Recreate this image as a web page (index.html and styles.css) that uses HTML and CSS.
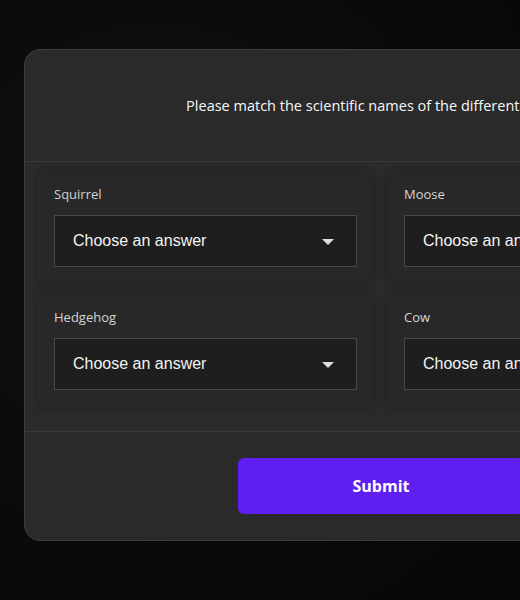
FILE: index.html
```html
<!DOCTYPE html>
<html lang="en">
<head>
<meta charset="utf-8">
<title>Match the animals</title>
<link rel="stylesheet" href="styles.css">
</head>
<body>
<main class="card">
  <header class="card-head">
    <p class="prompt">Please match the scientific names of the different animals</p>
  </header>
  <section class="grid">
    <div class="item">
      <label class="label">Squirrel</label>
      <div class="select"><span>Choose an answer</span><span class="arrow"></span></div>
    </div>
    <div class="item">
      <label class="label">Moose</label>
      <div class="select"><span>Choose an answer</span><span class="arrow"></span></div>
    </div>
    <div class="item">
      <label class="label">Hedgehog</label>
      <div class="select"><span>Choose an answer</span><span class="arrow"></span></div>
    </div>
    <div class="item">
      <label class="label">Cow</label>
      <div class="select"><span>Choose an answer</span><span class="arrow"></span></div>
    </div>
  </section>
  <footer class="card-foot">
    <button class="submit">Submit</button>
  </footer>
</main>
</body>
</html>
```
FILE: styles.css
```css
html, body {
  margin: 0;
  height: 100%;
}
body {
  background: radial-gradient(ellipse at 30% 40%, #121212 0%, #0a0a0a 60%, #060606 100%);
  overflow: hidden;
  padding: 49px 0 0 24px;
  box-sizing: border-box;
  font-family: "Open Sans", "Noto Sans", sans-serif;
}
.card {
  width: 714px;
  box-sizing: border-box;
  background: #2a2a2a;
  border: 1px solid #3d3d3d;
  border-radius: 16px;
}
.card-head {
  height: 111px;
  display: flex;
  align-items: center;
  justify-content: center;
  border-bottom: 1px solid #3a3a3a;
}
.prompt {
  margin: 0;
  color: #f7f7f7;
  font-size: 14.5px;
  font-weight: 500;
}
.grid {
  display: grid;
  grid-template-columns: 336px 336px;
  gap: 10px 14px;
  padding: 10px 12px 23px 12px;
  border-bottom: 1px solid #3a3a3a;
}
.item {
  display: flex;
  flex-direction: column;
  padding: 13px 16px 18px 17px;
  background: #282828;
  border-radius: 8px;
  box-shadow: 0 0 6px rgba(0, 0, 0, 0.25);
}
.label {
  color: #d4d4d4;
  font-size: 13px;
  line-height: 18px;
  margin-bottom: 12px;
}
.select {
  height: 52px;
  box-sizing: border-box;
  display: flex;
  align-items: center;
  justify-content: space-between;
  padding: 0 22px 0 18px;
  background: #1e1e1e;
  border: 1px solid #474747;
  font-family: "Liberation Sans", Arial, sans-serif;
  font-size: 16px;
  color: #f4f4f4;
  white-space: nowrap;
}
.arrow {
  width: 0;
  height: 0;
  border-left: 6px solid transparent;
  border-right: 6px solid transparent;
  border-top: 6px solid #dedede;
  margin-top: 2px;
}
.card-foot {
  display: flex;
  justify-content: center;
  padding: 26px 0 26px;
}
.submit {
  width: 286px;
  height: 56px;
  border: none;
  border-radius: 6px;
  background: #5f1ff1;
  color: #ffffff;
  font-family: "Open Sans", "Noto Sans", sans-serif;
  font-weight: 700;
  font-size: 16px;
}
```
